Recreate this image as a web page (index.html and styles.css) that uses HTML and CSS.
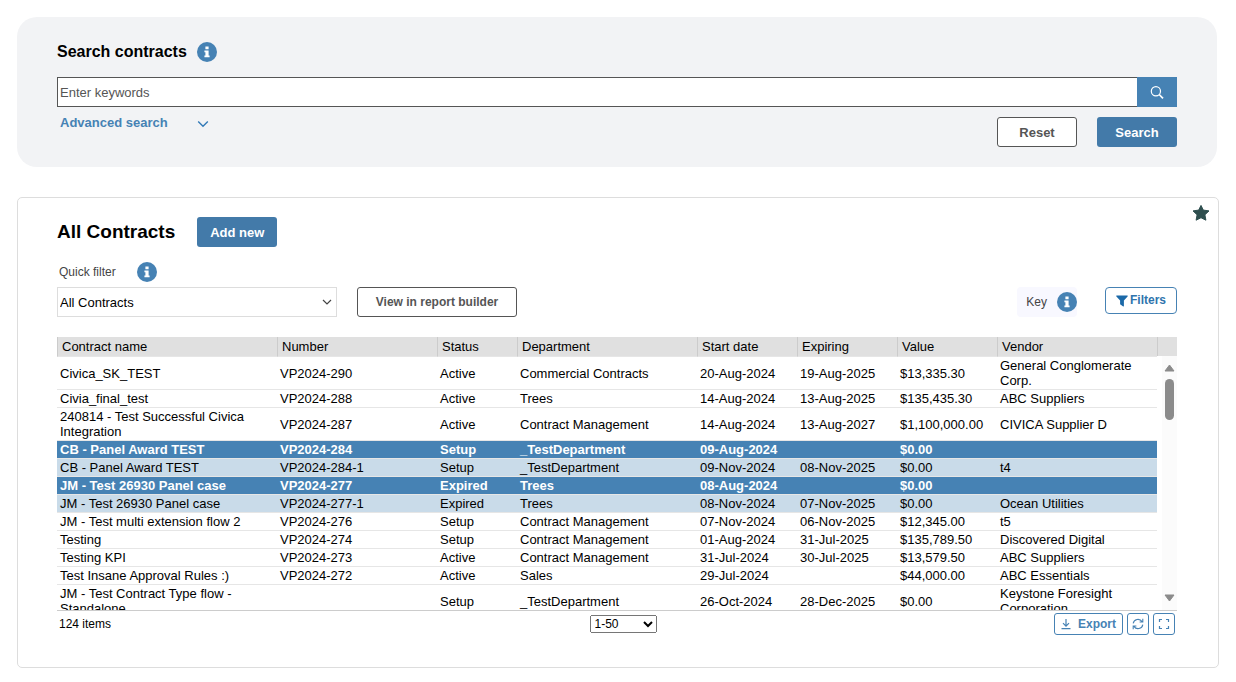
FILE: index.html
```html
<!DOCTYPE html>
<html lang="en">
<head>
  <meta charset="UTF-8">
  <title>Contracts</title>
  <meta name="viewport" content="width=device-width, initial-scale=1">
  <link rel="stylesheet" href="styles.css">
</head>
<body>
  <svg width="0" height="0" class="sprite" aria-hidden="true">
    <symbol id="info" viewBox="0 0 20 20">
      <circle cx="10" cy="10" r="10" fill="#4682b4"/>
      <path d="M8.4 4.6h3.2v2.7H8.4zM7.4 8.4h4.2v5.1h1v1.8H7.4v-1.8h1v-3.2h-1z" fill="#fff"/>
    </symbol>
  </svg>

  <form class="search-card" onsubmit="return false">
    <div class="heading-row">
      <h2>Search contracts</h2>
      <button type="button" class="info-btn" aria-label="About search"><svg><use href="#info"/></svg></button>
    </div>
    <div class="search-bar">
      <input type="text" placeholder="Enter keywords" aria-label="Enter keywords">
      <button type="submit" aria-label="Search keywords">
        <svg width="16" height="16" viewBox="0 0 16 16" fill="none" stroke="#fff" stroke-width="1.2"><circle cx="6.9" cy="7.2" r="4.6"/><path d="M10.2 10.5l3.8 3.8" stroke-width="1.7"/></svg>
      </button>
    </div>
    <div class="search-actions">
      <button type="button" class="advanced">
        Advanced search
        <svg width="12" height="12" viewBox="0 0 12 12" fill="none" stroke="#337ab7" stroke-width="1.4"><path d="M1.2 3.5L6 8.3l4.8-4.8"/></svg>
      </button>
      <button type="reset" class="btn outline">Reset</button>
      <button type="submit" class="btn primary">Search</button>
    </div>
  </form>

  <section class="list-card">
    <button type="button" class="star" aria-label="Favourite">
      <svg width="18" height="18" viewBox="0 0 18 18"><path d="M9 1.4l2.3 4.7 5.7.8-4.1 3.9 1 5.4L9 13.7l-4.9 2.5 1-5.4L1 6.9l5.7-.8z" fill="#2f4f4f" stroke="#2f4f4f" stroke-linejoin="round"/></svg>
    </button>
    <div class="title-row">
      <h1>All Contracts</h1>
      <button type="button" class="btn primary">Add new</button>
    </div>
    <div class="label-row">
      <label for="quick-filter">Quick filter</label>
      <button type="button" class="info-btn" aria-label="About quick filter"><svg><use href="#info"/></svg></button>
    </div>
    <div class="toolbar">
      <div class="select-wrap">
        <select id="quick-filter"><option>All Contracts</option></select>
        <svg width="10" height="10" viewBox="0 0 10 10" fill="none" stroke="#444" stroke-width="1.2"><path d="M1 3l4 4 4-4"/></svg>
      </div>
      <button type="button" class="btn outline report">View in report builder</button>
      <div class="key">
        <span>Key</span>
        <button type="button" class="info-btn" aria-label="Key"><svg><use href="#info"/></svg></button>
      </div>
      <button type="button" class="tool filters">
        <svg width="12" height="12" viewBox="0 0 12 12"><path d="M.8.5h10.4c.5 0 .7.6.4 1L7.9 5.4v5.7c0 .4-.4.5-.7.3L4.4 9.6c-.2-.1-.3-.3-.3-.5V5.4L.4 1.5C.1 1.1.3.5.8.5z" fill="#1b69a8"/></svg>
        Filters
      </button>
    </div>

    <div class="grid">
      <div class="grid-body">
        <table>
          <colgroup>
            <col class="c-name"><col class="c-number"><col class="c-status"><col class="c-dept">
            <col class="c-date"><col class="c-date"><col class="c-date"><col class="c-vendor">
          </colgroup>
          <thead>
            <tr><th>Contract name</th><th>Number</th><th>Status</th><th>Department</th><th>Start date</th><th>Expiring</th><th>Value</th><th>Vendor</th></tr>
          </thead>
          <tbody>
            <tr><td>Civica_SK_TEST</td><td>VP2024-290</td><td>Active</td><td>Commercial Contracts</td><td>20-Aug-2024</td><td>19-Aug-2025</td><td>$13,335.30</td><td>General Conglomerate Corp.</td></tr>
            <tr><td>Civia_final_test</td><td>VP2024-288</td><td>Active</td><td>Trees</td><td>14-Aug-2024</td><td>13-Aug-2025</td><td>$135,435.30</td><td>ABC Suppliers</td></tr>
            <tr><td>240814 - Test Successful Civica Integration</td><td>VP2024-287</td><td>Active</td><td>Contract Management</td><td>14-Aug-2024</td><td>13-Aug-2027</td><td>$1,100,000.00</td><td>CIVICA Supplier D</td></tr>
            <tr class="panel"><td>CB - Panel Award TEST</td><td>VP2024-284</td><td>Setup</td><td>_TestDepartment</td><td>09-Aug-2024</td><td></td><td>$0.00</td><td></td></tr>
            <tr class="child"><td>CB - Panel Award TEST</td><td>VP2024-284-1</td><td>Setup</td><td>_TestDepartment</td><td>09-Nov-2024</td><td>08-Nov-2025</td><td>$0.00</td><td>t4</td></tr>
            <tr class="panel"><td>JM - Test 26930 Panel case</td><td>VP2024-277</td><td>Expired</td><td>Trees</td><td>08-Aug-2024</td><td></td><td>$0.00</td><td></td></tr>
            <tr class="child"><td>JM - Test 26930 Panel case</td><td>VP2024-277-1</td><td>Expired</td><td>Trees</td><td>08-Nov-2024</td><td>07-Nov-2025</td><td>$0.00</td><td>Ocean Utilities</td></tr>
            <tr><td>JM - Test multi extension flow 2</td><td>VP2024-276</td><td>Setup</td><td>Contract Management</td><td>07-Nov-2024</td><td>06-Nov-2025</td><td>$12,345.00</td><td>t5</td></tr>
            <tr><td>Testing</td><td>VP2024-274</td><td>Setup</td><td>Contract Management</td><td>01-Aug-2024</td><td>31-Jul-2025</td><td>$135,789.50</td><td>Discovered Digital</td></tr>
            <tr><td>Testing KPI</td><td>VP2024-273</td><td>Active</td><td>Contract Management</td><td>31-Jul-2024</td><td>30-Jul-2025</td><td>$13,579.50</td><td>ABC Suppliers</td></tr>
            <tr><td>Test Insane Approval Rules :)</td><td>VP2024-272</td><td>Active</td><td>Sales</td><td>29-Jul-2024</td><td></td><td>$44,000.00</td><td>ABC Essentials</td></tr>
            <tr><td>JM - Test Contract Type flow - Standalone</td><td></td><td>Setup</td><td>_TestDepartment</td><td>26-Oct-2024</td><td>28-Dec-2025</td><td>$0.00</td><td>Keystone Foresight Corporation</td></tr>
          </tbody>
        </table>
      </div>
      <div class="grid-side" aria-hidden="true">
        <div class="side-head"></div>
        <div class="track">
          <svg width="11" height="8" viewBox="0 0 11 8"><path d="M5.5 1L10 7H1z" fill="#8b8b8b" stroke="#8b8b8b" stroke-linejoin="round"/></svg>
          <div class="thumb"></div>
          <svg width="11" height="8" viewBox="0 0 11 8"><path d="M5.5 7L10 1H1z" fill="#8b8b8b" stroke="#8b8b8b" stroke-linejoin="round"/></svg>
        </div>
      </div>
    </div>

    <div class="grid-footer">
      <span>124 items</span>
      <select class="page-select" aria-label="Page"><option>1-50</option><option>51-100</option><option>101-124</option></select>
      <div class="footer-tools">
        <button type="button" class="tool export">
          <svg width="10" height="12" viewBox="0 0 10 12" fill="none" stroke="#4682b4" stroke-width="1.2"><path d="M5 1v7M2 5.2l3 3 3-3M.5 10.6h9"/></svg>
          Export
        </button>
        <button type="button" class="tool square" aria-label="Refresh">
          <svg width="12" height="12" viewBox="0 0 12 12" fill="none" stroke="#4682b4" stroke-width="1.1"><path d="M1.2 5.4A4.8 4.8 0 0 1 10 3.6M10.8.8v3.2H7.6M10.8 6.6A4.8 4.8 0 0 1 2 8.4M1.2 11.2V8h3.2"/></svg>
        </button>
        <button type="button" class="tool square" aria-label="Full screen">
          <svg width="12" height="12" viewBox="0 0 12 12" fill="none" stroke="#4682b4" stroke-width="1.2"><path d="M1.5 4V1.5H4M8 1.5h2.5V4M10.5 8v2.5H8M4 10.5H1.5V8"/></svg>
        </button>
      </div>
    </div>
  </section>
</body>
</html>
```
FILE: styles.css
```css
* {
  box-sizing: border-box;
}
body {
  margin: 0;
  padding: 17px;
  padding-bottom: 14px;
  background: #fff;
  color: #000;
  font-family: Arial, "Liberation Sans", sans-serif;
  font-size: 13px;
  line-height: 15px;
}
h1, h2 {
  margin: 0;
}
h1 {
  font-size: 19px;
  line-height: 22px;
}
h2 {
  font-size: 16px;
  line-height: 18px;
}
button, input, select {
  font: inherit;
  color: inherit;
}
button {
  padding: 0;
  border: none;
  background: none;
  cursor: pointer;
}
svg {
  display: block;
  flex: none;
}
.sprite {
  position: absolute;
}

.btn {
  height: 30px;
  min-width: 80px;
  border-radius: 3px;
  font-weight: bold;
}
.btn.primary {
  background: #437aa9;
  color: #fff;
}
.btn.outline {
  background: #fff;
  border: 1px solid #555;
  color: #555;
}
.info-btn, .info-btn svg {
  width: 20px;
  height: 20px;
}

/* search */
.search-card {
  margin-right: 2px;
  padding: 25px 40px 20px;
  border-radius: 20px;
  background: #f2f3f5;
}
.heading-row {
  display: flex;
  align-items: center;
  gap: 10px;
}
.search-bar {
  display: flex;
  height: 30px;
  margin-top: 15px;
}
.search-bar input {
  flex: 1;
  min-width: 0;
  padding: 0 2px;
  border: 1px solid #555;
  border-right: none;
  background: #fff;
}
.search-bar input::placeholder {
  color: #555;
}
.search-bar button {
  display: flex;
  align-items: center;
  justify-content: center;
  width: 40px;
  background: #4682b4;
}
.search-actions {
  display: flex;
  align-items: flex-start;
  gap: 20px;
  margin-top: 10px;
}
.advanced {
  display: flex;
  align-items: flex-end;
  gap: 29px;
  height: 13px;
  margin-right: auto;
  padding-left: 3px;
  color: #4682b4;
  font-weight: bold;
}

/* contract list */
.list-card {
  position: relative;
  margin-top: 30px;
  padding: 19px 41px 32px 39px;
  border: 1px solid #ddd;
  border-radius: 5px;
}
.star {
  position: absolute;
  top: 6px;
  right: 8px;
}
.title-row {
  display: flex;
  align-items: center;
  gap: 22px;
}
.label-row {
  display: flex;
  align-items: center;
  gap: 21px;
  margin-top: 15px;
  padding-left: 2px;
  color: #444;
  font-size: 12px;
}
.toolbar {
  display: flex;
  gap: 20px;
  margin-top: 5px;
  margin-bottom: 20px;
}
.select-wrap {
  position: relative;
  width: 280px;
}
.select-wrap select {
  width: 100%;
  height: 30px;
  padding: 0 24px 0 2px;
  border: 1px solid #ddd;
  border-radius: 0;
  background: #fff;
  appearance: none;
}
.select-wrap svg {
  position: absolute;
  top: 10px;
  right: 5px;
  pointer-events: none;
}
.btn.report {
  width: 160px;
  font-size: 12px;
}
.key {
  display: flex;
  align-items: center;
  gap: 10px;
  height: 30px;
  margin-left: auto;
  margin-right: 8px;
  padding-left: 9px;
  border-radius: 4px;
  background: #f8f8ff;
  color: #444;
  font-size: 12px;
}
.tool {
  display: flex;
  align-items: center;
  justify-content: center;
  height: 22px;
  border: 1px solid #4682b4;
  border-radius: 3px;
  background: #fff;
  color: #4682b4;
  font-size: 12px;
  font-weight: bold;
}
.tool.filters {
  gap: 2px;
  width: 72px;
  height: 27px;
  border-radius: 4px;
  color: #2f74ad;
}

.grid {
  display: flex;
  height: 274px;
  border-bottom: 1px solid #ccc;
}
.grid-body {
  flex: 1;
  overflow: hidden;
}
table {
  width: 100%;
  border-collapse: separate;
  border-spacing: 0;
  table-layout: fixed;
}
.c-name { width: 220px; }
.c-number { width: 160px; }
.c-status { width: 80px; }
.c-dept { width: 180px; }
.c-date { width: 100px; }
.c-vendor { width: 160px; }
th {
  height: 20px;
  padding: 1px 4px;
  border-left: 1px solid #ccc;
  border-bottom: 1px solid #e6e6e6;
  background: #e0e0e0;
  font-weight: normal;
  text-align: left;
}
td {
  height: 18px;
  padding: 1px 3px;
  border-bottom: 1px solid #e6e6e6;
}
.panel td {
  background: #4682b4;
  color: #fff;
  font-weight: bold;
}
.child td {
  background: #c9dbe9;
}
.grid-side {
  display: flex;
  flex-direction: column;
  width: 20px;
}
.side-head {
  height: 19px;
  border-left: 1px solid #ccc;
  background: #e0e0e0;
}
.track {
  flex: 1;
  display: flex;
  flex-direction: column;
  align-items: center;
  margin-left: 5px;
  padding: 8px 0;
  background: #fbfbfb;
}
.thumb {
  width: 9px;
  height: 41px;
  margin: 7px 0 auto;
  border-radius: 5px;
  background: #8b8b8b;
}

.grid-footer {
  display: grid;
  grid-template-columns: 1fr auto 1fr;
  align-items: center;
  padding: 2px 2px 0;
  font-size: 12px;
}
.page-select {
  width: 67px;
  height: 18px;
  margin-left: 12px;
  padding: 0;
}
.footer-tools {
  display: flex;
  justify-content: flex-end;
  gap: 4px;
}
.tool.export {
  gap: 7px;
  width: 69px;
}
.tool.square {
  width: 22px;
}
```
